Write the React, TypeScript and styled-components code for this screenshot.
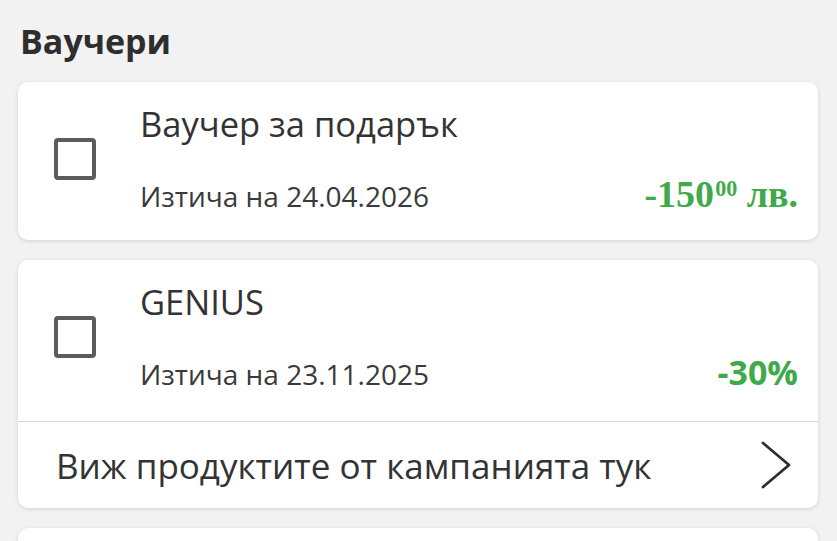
import React from 'react';
import styled, { createGlobalStyle } from 'styled-components';

const GlobalStyle = createGlobalStyle`
  html, body {
    margin: 0;
    padding: 0;
    background: #f2f2f2;
    font-family: "Open Sans", "Noto Sans", sans-serif;
    color: #333;
  }
`;

const Page = styled.div`
  padding: 21px 19px 0 18px;
  display: flex;
  flex-direction: column;
`;

const Heading = styled.h2`
  margin: 0 0 21px 2px;
  font-size: 34px;
  line-height: 40px;
  font-weight: 700;
  color: #2e2e2e;
`;

const List = styled.div`
  display: flex;
  flex-direction: column;
  gap: 20px;
`;

const Card = styled.div`
  background: #fff;
  border-radius: 10px;
  box-shadow: 0 1px 4px rgba(0, 0, 0, 0.13);
  display: flex;
  flex-direction: column;
  overflow: hidden;
`;

const Top = styled.div<{ $bottom: number }>`
  display: flex;
  align-items: center;
  padding: 21px 20px ${(p) => p.$bottom}px 36px;
`;

const Box = styled.div`
  width: 42px;
  height: 42px;
  box-sizing: border-box;
  border: 4px solid #5c5c5c;
  border-radius: 4px;
  flex-shrink: 0;
`;

const Body = styled.div`
  flex: 1;
  margin-left: 44px;
  display: flex;
  flex-direction: column;
  gap: 33px;
`;

const Title = styled.div`
  font-size: 34.5px;
  line-height: 42px;
  color: #333;
`;

const Row = styled.div`
  display: flex;
  justify-content: space-between;
  align-items: baseline;
`;

const Expiry = styled.div`
  font-size: 28px;
  line-height: 36px;
  color: #3a3a3a;
`;

const Price = styled.div`
  font-family: "Liberation Serif", serif;
  font-weight: 700;
  font-size: 38px;
  line-height: 20px;
  color: #3faa4a;

  sup {
    font-size: 0.58em;
    line-height: 0;
    vertical-align: baseline;
    position: relative;
    top: -0.52em;
    margin-left: 1px;
  }
`;

const Percent = styled.div`
  font-weight: 700;
  font-size: 34px;
  line-height: 20px;
  color: #3faa4a;
`;

const LinkRow = styled.div`
  border-top: 1px solid #d6d6d6;
  height: 86px;
  display: flex;
  align-items: center;
  justify-content: space-between;
  padding: 0 27px 0 38px;
  font-size: 35px;
  color: #333;
`;

const Chevron = () => (
  <svg width="30" height="48" viewBox="0 0 30 48" fill="none">
    <polyline points="2,2 28,24 2,46" stroke="#2f2f2f" strokeWidth="2.8" strokeLinecap="round" strokeLinejoin="round" />
  </svg>
);

const Stub = styled(Card)`
  height: 60px;
`;

export default function App() {
  return (
    <>
      <GlobalStyle />
      <Page>
        <Heading>Ваучери</Heading>
        <List>
          <Card>
            <Top $bottom={26}>
              <Box />
              <Body>
                <Title>Ваучер за подарък</Title>
                <Row>
                  <Expiry>Изтича на 24.04.2026</Expiry>
                  <Price>
                    -150<sup>00</sup> лв.
                  </Price>
                </Row>
              </Body>
            </Top>
          </Card>
          <Card>
            <Top $bottom={29}>
              <Box />
              <Body>
                <Title>GENIUS</Title>
                <Row>
                  <Expiry>Изтича на 23.11.2025</Expiry>
                  <Percent>-30%</Percent>
                </Row>
              </Body>
            </Top>
            <LinkRow>
              <span>Виж продуктите от кампанията тук</span>
              <Chevron />
            </LinkRow>
          </Card>
          <Stub />
        </List>
      </Page>
    </>
  );
}
